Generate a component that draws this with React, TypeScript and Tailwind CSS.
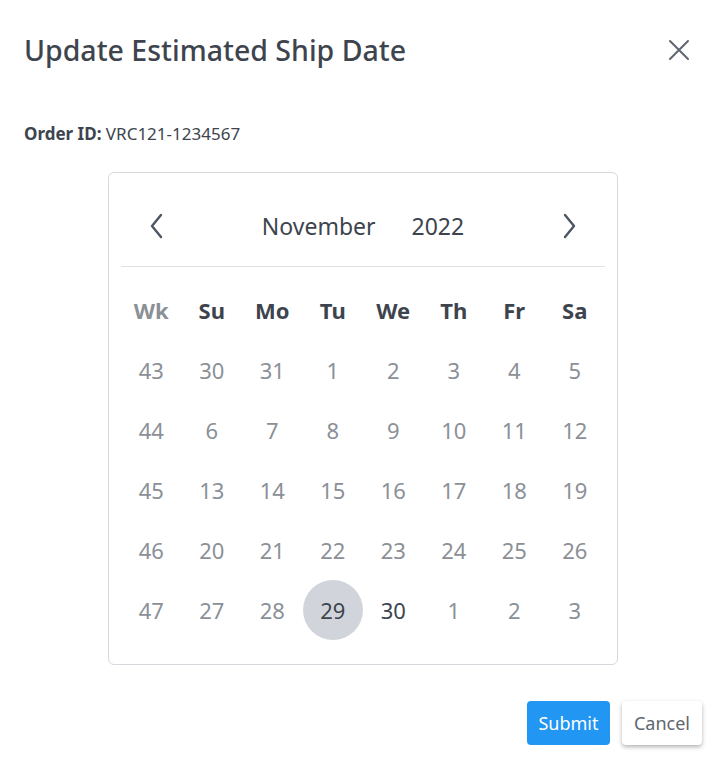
import React from "react";

type Day = { n: number; muted: boolean; selected?: boolean };

const weeks: { wk: number; days: Day[] }[] = [
  { wk: 43, days: [30, 31, 1, 2, 3, 4, 5].map((n) => ({ n, muted: true })) },
  { wk: 44, days: [6, 7, 8, 9, 10, 11, 12].map((n) => ({ n, muted: true })) },
  { wk: 45, days: [13, 14, 15, 16, 17, 18, 19].map((n) => ({ n, muted: true })) },
  { wk: 46, days: [20, 21, 22, 23, 24, 25, 26].map((n) => ({ n, muted: true })) },
  {
    wk: 47,
    days: [
      { n: 27, muted: true },
      { n: 28, muted: true },
      { n: 29, muted: false, selected: true },
      { n: 30, muted: false },
      { n: 1, muted: true },
      { n: 2, muted: true },
      { n: 3, muted: true },
    ],
  },
];

const dayNames = ["Su", "Mo", "Tu", "We", "Th", "Fr", "Sa"];

function Chevron({ dir }: { dir: "left" | "right" }) {
  return (
    <svg width="18" height="28" viewBox="0 0 18 28" fill="none">
      <path
        d={dir === "left" ? "M13 3 L4 14 L13 25" : "M5 3 L14 14 L5 25"}
        stroke="#4b5563"
        strokeWidth="2.4"
        strokeLinecap="round"
        strokeLinejoin="round"
      />
    </svg>
  );
}

export default function App() {
  return (
    <div
      className="h-[764px] w-[728px] bg-white text-[#3d444d]"
      style={{ fontFamily: '"Noto Sans", "Open Sans", sans-serif' }}
    >
      <div className="flex items-start justify-between pl-6 pr-[38px] pt-[30px]">
        <h1 className="text-[28.5px] leading-[40px] font-medium text-[#3d444d]">Update Estimated Ship Date</h1>
        <button type="button" className="mt-[9px]">
          <svg width="22" height="22" viewBox="0 0 22 22">
            <path d="M2 2 L20 20 M20 2 L2 20" stroke="#5f6670" strokeWidth="2" strokeLinecap="round" />
          </svg>
        </button>
      </div>

      <p className="mt-[52px] pl-6 text-[17px] leading-6 text-[#3d444d]">
        <span className="font-bold">Order ID:</span> VRC121-1234567
      </p>

      <div className="ml-[108px] mt-[26px] w-[510px] rounded-md border border-[#d5d8dc] px-[12px] pb-[24px] pt-[37px]">
        <div className="flex items-center justify-between px-[27px] pb-[24px]">
          <Chevron dir="left" />
          <div className="flex gap-[36px] text-[23px] leading-8 text-[#3d444d]">
            <span>November</span>
            <span>2022</span>
          </div>
          <Chevron dir="right" />
        </div>
        <div className="border-t border-[#dfe2e5]" />
        <div className="mt-[13px] grid grid-cols-8 text-center">
          <div className="flex h-[60px] items-center justify-center text-[22px] font-bold text-[#8b9097]">Wk</div>
          {dayNames.map((d) => (
            <div key={d} className="flex h-[60px] items-center justify-center text-[22px] font-bold text-[#3d444d]">
              {d}
            </div>
          ))}
          {weeks.map((w) => (
            <React.Fragment key={w.wk}>
              <div className="flex h-[60px] items-center justify-center text-[22px] text-[#8b9097]">{w.wk}</div>
              {w.days.map((d, i) => (
                <div key={i} className="flex h-[60px] items-center justify-center">
                  <span
                    className={`flex h-[60px] w-[60px] items-center justify-center rounded-full text-[22px] ${
                      d.selected ? "bg-[#d1d5db] text-[#3d444d]" : d.muted ? "text-[#8b9097]" : "text-[#3d444d]"
                    }`}
                  >
                    {d.n}
                  </span>
                </div>
              ))}
            </React.Fragment>
          ))}
        </div>
      </div>

      <div className="mt-[36px] flex justify-end gap-3 pr-[26px]">
        <button
          type="button"
          className="h-[44px] w-[83px] rounded-[4px] bg-[#2196f3] text-[18px] text-white"
        >
          Submit
        </button>
        <button
          type="button"
          className="h-[44px] w-[80px] rounded-[4px] bg-white text-[18px] text-[#5f6670] shadow-[0_2px_4px_rgba(0,0,0,0.3)]"
        >
          Cancel
        </button>
      </div>
    </div>
  );
}
